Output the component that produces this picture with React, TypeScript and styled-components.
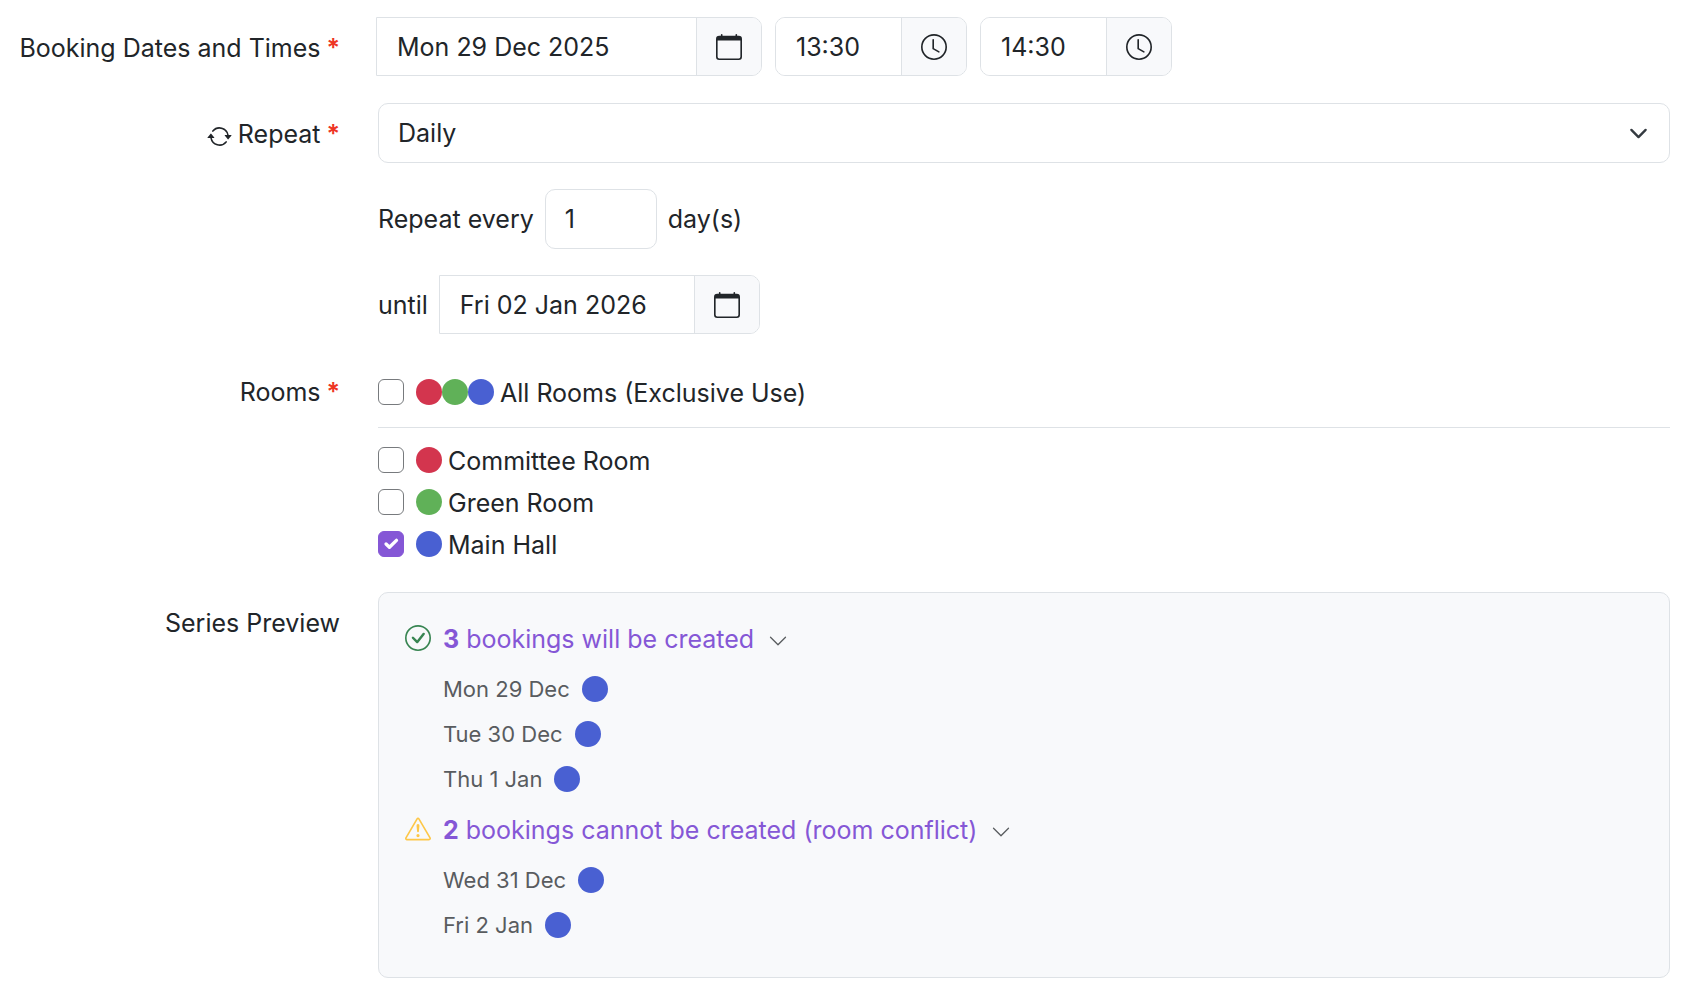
import React, { useState } from "react";
import styled, { createGlobalStyle } from "styled-components";
import {
  BsArrowRepeat,
  BsCalendar,
  BsCheckCircle,
  BsChevronDown,
  BsClock,
  BsExclamationTriangle,
} from "react-icons/bs";

const colors = {
  text: "#212529",
  muted: "#595c5f",
  border: "#dee2e6",
  surface: "#f8f9fb",
  primary: "#8557d6",
  required: "#ee3524",
  success: "#388552",
  warning: "#fdc748",
};

const roomColors = { red: "#d3354e", green: "#60b158", blue: "#4960d2" };

const GlobalStyle = createGlobalStyle`
  *, *::before, *::after { box-sizing: border-box; }
  body {
    margin: 0;
    background: #fff;
    color: ${colors.text};
    font-family: Inter, "Liberation Sans", sans-serif;
    font-size: 25px;
    line-height: 38px;
  }
  input, select, button { font: inherit; color: inherit; }
`;

const Form = styled.form`
  display: flex;
  flex-direction: column;
  padding: 17px 20px 11px 24px;
`;

const Row = styled.div<{ $gap?: number }>`
  display: grid;
  grid-template-columns: 316px minmax(0, 1fr);
  column-gap: 38px;
  margin-bottom: ${(p) => p.$gap ?? 0}px;
`;

const labelStyle = `
  display: flex;
  align-items: center;
  justify-content: flex-end;
  gap: 6px;
  white-space: nowrap;
`;

const Label = styled.label<{ $height: number }>`
  ${labelStyle}
  height: ${(p) => p.$height}px;
`;

const GroupLabel = styled.span<{ $height: number }>`
  ${labelStyle}
  height: ${(p) => p.$height}px;
`;

const Required = styled.span`
  color: ${colors.required};
  font-weight: 600;
`;

const RepeatIcon = styled(BsArrowRepeat)`
  width: 25px;
  height: 25px;
  margin-top: 4px;
`;

const Fields = styled.div`
  display: flex;
  gap: 13px;
  margin-left: -2px;
`;

const Stack = styled.div`
  display: flex;
  flex-direction: column;
  gap: 26px;
`;

const InputGroup = styled.div<{ $width: number; $square?: boolean }>`
  display: flex;
  width: ${(p) => p.$width}px;
  height: 59px;
  border: 1px solid ${colors.border};
  border-radius: ${(p) => (p.$square ? "0 10px 10px 0" : "10px")};
  overflow: hidden;
`;

const GroupInput = styled.input`
  flex: 1;
  min-width: 0;
  border: 0;
  padding: 0 20px;
  background: #fff;
`;

const Addon = styled.button`
  display: flex;
  align-items: center;
  justify-content: center;
  width: 65px;
  padding: 0;
  border: 0;
  border-left: 1px solid ${colors.border};
  background: ${colors.surface};

  svg {
    width: 26px;
    height: 26px;
  }
`;

const SelectWrap = styled.div`
  display: grid;
  align-items: center;

  > * { grid-area: 1 / 1; }

  svg {
    justify-self: end;
    margin-right: 22px;
    pointer-events: none;
  }
`;

const Select = styled.select`
  width: 100%;
  height: 60px;
  padding: 0 19px;
  border: 1px solid ${colors.border};
  border-radius: 10px;
  background: #fff;
  appearance: none;
`;

const Inline = styled.div`
  display: flex;
  align-items: center;
  gap: 11px;
`;

const NumberInput = styled.input`
  width: 112px;
  height: 60px;
  padding: 0 19px;
  border: 1px solid ${colors.border};
  border-radius: 10px;
  appearance: textfield;

  &::-webkit-inner-spin-button { appearance: none; }
`;

const RoomList = styled.div`
  display: flex;
  flex-direction: column;
  gap: 4px;
`;

const RoomOption = styled.label`
  display: flex;
  align-items: center;
  align-self: flex-start;
  height: 38px;
`;

const CheckSlot = styled.span`
  display: grid;
  margin-right: 12px;

  > * { grid-area: 1 / 1; }

  svg { pointer-events: none; }
`;

const Checkbox = styled.input`
  width: 26px;
  height: 26px;
  margin: 0;
  border: 1px solid #777a7d;
  border-radius: 6px;
  background: #fff;
  appearance: none;

  &:checked {
    border-color: ${colors.primary};
    background: ${colors.primary};
  }
`;

const Dot = styled.span<{ $color: string }>`
  width: 26px;
  height: 26px;
  border-radius: 50%;
  background: ${(p) => p.$color};
`;

const RoomName = styled.span`
  margin-left: 6px;
  padding-top: 2px;
`;

const Divider = styled.hr`
  width: 100%;
  margin: 12px 0 9px;
  border: 0;
  border-top: 1px solid ${colors.border};
`;

const Preview = styled.section`
  display: flex;
  flex-direction: column;
  gap: 10px;
  padding: 27px 26px 30px;
  border: 1px solid ${colors.border};
  border-radius: 10px;
  background: ${colors.surface};
`;

const PreviewGroup = styled.div<{ $tone: string }>`
  display: grid;
  grid-template-columns: 26px minmax(0, 1fr);
  column-gap: 12px;

  > svg {
    width: 26px;
    height: 26px;
    margin-top: 5px;
    color: ${(p) => p.$tone};
  }
`;

const Toggle = styled.button`
  display: flex;
  align-items: center;
  justify-self: start;
  padding: 0;
  border: 0;
  background: none;
  color: ${colors.primary};
  white-space: nowrap;

  svg {
    width: 20px;
    height: 20px;
    margin: 4px 0 0 14px;
    color: ${colors.muted};
  }
`;

const Dates = styled.ul`
  grid-column: 2;
  margin: 8px 0 0;
  padding: 0;
  list-style: none;
  color: ${colors.muted};
  font-size: 22px;
`;

const DateItem = styled.li`
  display: flex;
  align-items: center;
  gap: 12px;
  height: 45px;
`;

interface DateGroupProps {
  icon: React.ReactNode;
  tone: string;
  text: string;
  dates: string[];
}

function DateGroup({ icon, tone, text, dates }: DateGroupProps) {
  const [open, setOpen] = useState(true);
  return (
    <PreviewGroup $tone={tone}>
      {icon}
      <Toggle type="button" aria-expanded={open} onClick={() => setOpen(!open)}>
        <span>
          <strong>{dates.length}</strong> {text}
        </span>
        <BsChevronDown />
      </Toggle>
      {open && (
        <Dates>
          {dates.map((date) => (
            <DateItem key={date}>
              {date}
              <Dot $color={roomColors.blue} />
            </DateItem>
          ))}
        </Dates>
      )}
    </PreviewGroup>
  );
}

interface RoomProps {
  name: string;
  dots: string[];
  initial?: boolean;
}

function Room({ name, dots, initial = false }: RoomProps) {
  const [checked, setChecked] = useState(initial);
  return (
    <RoomOption>
      <CheckSlot>
        <Checkbox type="checkbox" checked={checked} onChange={() => setChecked(!checked)} />
        {checked && (
          <svg width="26" height="26" viewBox="0 0 20 20" fill="none">
            <path d="m6.2 10 2.6 2.5 5.4-5.3" stroke="#fff" strokeWidth="2.6" strokeLinecap="round" strokeLinejoin="round" />
          </svg>
        )}
      </CheckSlot>
      {dots.map((color) => (
        <Dot key={color} $color={color} />
      ))}
      <RoomName>{name}</RoomName>
    </RoomOption>
  );
}

export default function App() {
  return (
    <>
      <GlobalStyle />
      <Form>
        <Row $gap={24}>
          <Label htmlFor="date" $height={62}>
            Booking Dates and Times <Required>*</Required>
          </Label>
          <Fields>
            <InputGroup $width={386} $square>
              <GroupInput id="date" defaultValue="Mon 29 Dec 2025" />
              <Addon type="button" aria-label="Choose date"><BsCalendar /></Addon>
            </InputGroup>
            <InputGroup $width={192}>
              <GroupInput aria-label="Start time" defaultValue="13:30" />
              <Addon type="button" aria-label="Choose start time"><BsClock /></Addon>
            </InputGroup>
            <InputGroup $width={192}>
              <GroupInput aria-label="End time" defaultValue="14:30" />
              <Addon type="button" aria-label="Choose end time"><BsClock /></Addon>
            </InputGroup>
          </Fields>
        </Row>

        <Row $gap={39}>
          <Label htmlFor="repeat" $height={62}>
            <RepeatIcon />
            Repeat <Required>*</Required>
          </Label>
          <Stack>
            <SelectWrap>
              <Select id="repeat" defaultValue="Daily">
                <option>Daily</option>
              </Select>
              <svg width="19" height="19" viewBox="0 0 16 16" fill="none">
                <path d="m2 5 6 6 6-6" stroke="#343a40" strokeWidth="2" strokeLinecap="round" strokeLinejoin="round" />
              </svg>
            </SelectWrap>
            <Inline>
              <label htmlFor="interval">Repeat every</label>
              <NumberInput id="interval" type="number" min={1} defaultValue={1} />
              <span>day(s)</span>
            </Inline>
            <Inline>
              <label htmlFor="until">until</label>
              <InputGroup $width={321} $square>
                <GroupInput id="until" defaultValue="Fri 02 Jan 2026" />
                <Addon type="button" aria-label="Choose end date"><BsCalendar /></Addon>
              </InputGroup>
            </Inline>
          </Stack>
        </Row>

        <Row $gap={29}>
          <GroupLabel id="rooms" $height={38}>
            Rooms <Required>*</Required>
          </GroupLabel>
          <RoomList role="group" aria-labelledby="rooms">
            <Room name="All Rooms (Exclusive Use)" dots={[roomColors.red, roomColors.green, roomColors.blue]} />
            <Divider />
            <Room name="Committee Room" dots={[roomColors.red]} />
            <Room name="Green Room" dots={[roomColors.green]} />
            <Room name="Main Hall" dots={[roomColors.blue]} initial />
          </RoomList>
        </Row>

        <Row>
          <GroupLabel id="preview" $height={62}>Series Preview</GroupLabel>
          <Preview aria-labelledby="preview">
            <DateGroup
              icon={<BsCheckCircle />}
              tone={colors.success}
              text="bookings will be created"
              dates={["Mon 29 Dec", "Tue 30 Dec", "Thu 1 Jan"]}
            />
            <DateGroup
              icon={<BsExclamationTriangle />}
              tone={colors.warning}
              text="bookings cannot be created (room conflict)"
              dates={["Wed 31 Dec", "Fri 2 Jan"]}
            />
          </Preview>
        </Row>
      </Form>
    </>
  );
}
